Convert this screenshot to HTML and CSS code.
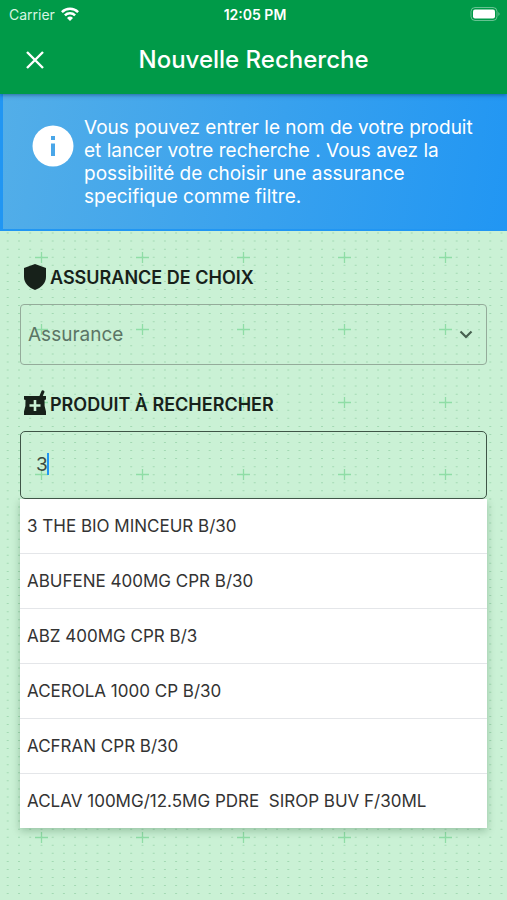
FILE: index.html
```html
<!DOCTYPE html>
<html lang="fr">
<head>
<meta charset="utf-8">
<meta name="viewport" content="width=device-width, initial-scale=1">
<title>Nouvelle Recherche</title>
<link rel="stylesheet" href="styles.css">
</head>
<body>
<svg class="backdrop" width="100%" height="100%" aria-hidden="true">
  <defs>
    <pattern id="grid" width="101" height="145" patternUnits="userSpaceOnUse" x="-10">
      <path d="M6.500 7v145M17.700 7v145M29 7v145M40.200 7v145M51.500 7v145M62.700 7v145M73.900 7v145M85.100 7v145M96.300 7v145" fill="none" stroke="#a3d9b3" stroke-width="2" stroke-dasharray="1 7.0556"/>
      <path d="M45 112.500h13M51.500 107v11M45 184.500h13M45 39.500h13M51.500 34v11" fill="none" stroke="#8fdda6" stroke-width="1.300"/>
    </pattern>
  </defs>
  <rect width="100%" height="100%" fill="url(#grid)"/>
</svg>
<header class="appbar">
  <div class="status">
    <span class="carrier">Carrier
      <svg width="18" height="14" viewBox="0 0 18 14" fill="none" stroke="#fff" stroke-width="2.500" aria-hidden="true"><path d="M.9 5.200a11.500 11.500 0 0 1 16.200 0M3.900 8.300a7.200 7.200 0 0 1 10.200 0"/><path d="M9 14 6 10.900a4.300 4.300 0 0 1 6 0z" fill="#fff" stroke="none"/></svg>
    </span>
    <span class="clock">12:05 PM</span>
    <svg class="battery" width="31" height="14" viewBox="0 0 31 14" aria-hidden="true"><rect x="1" y=".5" width="26" height="13" rx="4" fill="none" stroke="#fff" stroke-opacity=".4"/><rect x="3" y="2.500" width="22" height="9" rx="2" fill="#fff"/><path d="M28.500 5v4q2-2 0-4" fill="#fff" fill-opacity=".5"/></svg>
  </div>
  <div class="titlebar">
    <button class="close" type="button" aria-label="Fermer"><svg width="18" height="18" viewBox="0 0 18 18" fill="none" stroke="#fff" stroke-width="2.400"><path d="m1 1 16 16M17 1 1 17"/></svg></button>
    <h1>Nouvelle Recherche</h1>
  </div>
</header>
<section class="notice">
  <svg class="info" width="42" height="42" viewBox="0 0 42 42" aria-hidden="true"><circle cx="21" cy="21" r="20.500" fill="#fff"/><path d="M19 11h4v4h-4zM19 18.500h4V31h-4z" fill="#4aa6e8"/></svg>
  <p>Vous pouvez entrer le nom de votre produit et lancer votre recherche . Vous avez la possibilité de choisir une assurance specifique comme filtre.</p>
</section>
<main>
  <label class="heading" for="assurance">
    <svg width="26" height="28" viewBox="0 0 26 28" aria-hidden="true"><path d="M13 1 24 5v9c0 6-5 11-11 13C7 25 2 20 2 14V5z" fill="#17211a"/></svg>
    ASSURANCE DE CHOIX
  </label>
  <div class="picker">
    <select id="assurance"><option>Assurance</option></select>
    <svg class="chevron" width="14" height="10" viewBox="0 0 14 10" fill="none" stroke="#46604f" stroke-width="2.200" aria-hidden="true"><path d="m1.500 1.500 5.500 5.500 5.500-5.500"/></svg>
  </div>
  <label class="heading" for="produit">
    <svg width="26" height="28" viewBox="0 0 26 28" aria-hidden="true"><path d="M2 6h22v3.500l-1.500.5q-.5 6 1.500 11.500V25H2v-3.500Q4 16 3.500 10L2 9.500z" fill="#17211a"/><path d="m18.500 7.500 2.300-5.500" stroke="#17211a" stroke-width="3.200" stroke-linecap="round"/><path d="M13 10v11M7.500 15.500h11" stroke="#caf1d5" stroke-width="2.600"/></svg>
    PRODUIT À RECHERCHER
  </label>
  <div class="search">
    <input id="produit" type="text" value="3" autocomplete="off">
    <span class="caret"></span>
  </div>
  <ul class="results">
    <li><button type="button">3 THE BIO MINCEUR B/30</button></li>
    <li><button type="button">ABUFENE 400MG CPR B/30</button></li>
    <li><button type="button">ABZ 400MG CPR B/3</button></li>
    <li><button type="button">ACEROLA 1000 CP B/30</button></li>
    <li><button type="button">ACFRAN CPR B/30</button></li>
    <li><button type="button">ACLAV 100MG/12.5MG PDRE&nbsp; SIROP BUV F/30ML</button></li>
  </ul>
</main>
</body>
</html>
```

FILE: styles.css
```css
* {
  box-sizing: border-box;
}

body {
  margin: 0;
  min-height: 100vh;
  position: relative;
  background: #caf1d5;
  color: #17211a;
  font-family: Inter, "Liberation Sans", sans-serif;
}

button,
input,
select {
  font: inherit;
  color: inherit;
}

.backdrop {
  position: absolute;
  inset: 0;
  z-index: -1;
}

.appbar {
  position: relative;
  z-index: 1;
  background: #009a48;
  color: #fff;
  box-shadow: 0 1px 4px rgba(0, 40, 80, 0.5);
}

.status {
  display: grid;
  grid-template-columns: 1fr auto 1fr;
  align-items: center;
  height: 28px;
  padding: 0 6px 0 9px;
  font-size: 14px;
}

.carrier {
  display: flex;
  align-items: center;
  gap: 6px;
  color: #d8f5e2;
}

.clock {
  font-weight: 600;
}

.battery {
  justify-self: end;
}

.titlebar {
  display: grid;
  grid-template-columns: 70px 1fr 70px;
  align-items: center;
  height: 66px;
  padding-bottom: 2px;
}

.close {
  display: flex;
  justify-content: center;
  padding: 12px;
  border: 0;
  background: none;
}

h1 {
  margin: 0;
  font-size: 24px;
  font-weight: 500;
  line-height: 32px;
  text-align: center;
}

.notice {
  display: flex;
  align-items: flex-start;
  gap: 10px;
  padding: 22px 20px 21px 29px;
  border: solid #2196f3;
  border-width: 0 0 2px 3px;
  background: linear-gradient(100deg, #53aee8, #2196f3);
  color: #fff;
}

.info {
  flex: none;
  margin-top: 9px;
}

.notice p {
  margin: 0;
  font-size: 19px;
  line-height: 23px;
}

main {
  padding: 32px 20px 70px;
}

.heading {
  display: flex;
  align-items: center;
  gap: 2px;
  height: 28px;
  padding-left: 2px;
  font-size: 18px;
  font-weight: 600;
}

.picker {
  position: relative;
  margin: 13px 0 25px;
}

select {
  display: block;
  width: 100%;
  height: 61px;
  padding: 0 7px;
  border: 1px solid #94ab9a;
  border-radius: 4px;
  background: none;
  appearance: none;
  color: #5b7565;
  font-size: 19px;
}

.chevron {
  position: absolute;
  top: 26px;
  right: 14px;
}

.search {
  position: relative;
  margin-top: 13px;
}

input {
  display: block;
  width: 100%;
  height: 68px;
  padding: 0 15px 2px;
  border: 1px solid #3f5547;
  border-radius: 5px;
  outline: 0;
  background: none;
  color: #3b4a40;
  font-size: 19px;
}

.caret {
  position: absolute;
  top: 22px;
  left: 27px;
  width: 2px;
  height: 22px;
  background: #2196f3;
}

.results {
  margin: 0;
  padding: 0;
  list-style: none;
  background: #fff;
  box-shadow: 0 3px 8px rgba(0, 60, 20, 0.25);
}

.results li + li {
  border-top: 1px solid #e4e6e9;
}

.results button {
  display: block;
  width: 100%;
  height: 54px;
  padding: 0 7px;
  border: 0;
  background: none;
  color: #333;
  font-size: 17px;
  text-align: left;
}
```
